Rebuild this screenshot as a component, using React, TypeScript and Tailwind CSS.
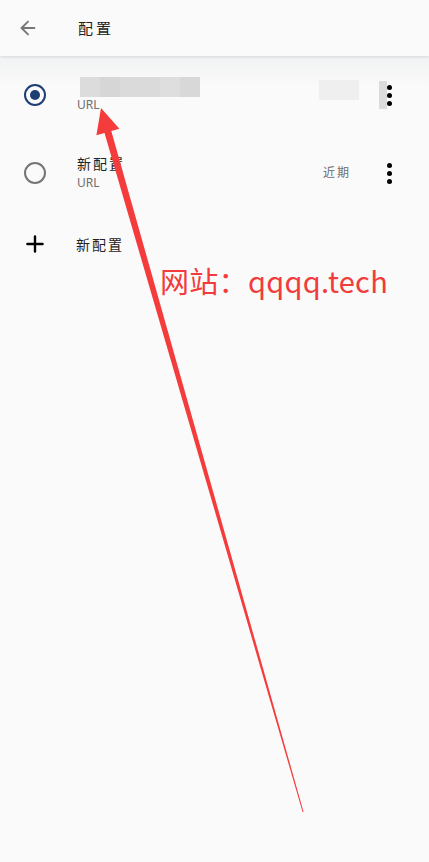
import { ArrowLeft, Plus } from "lucide-react";

const cjk = "font-['Noto_Sans','Noto_Sans_CJK_SC',sans-serif]";

function Dots() {
  return (
    <div className="flex w-[20px] flex-col items-center gap-[3px]">
      <span className="h-[5px] w-[5px] rounded-full bg-black" />
      <span className="h-[5px] w-[5px] rounded-full bg-black" />
      <span className="h-[5px] w-[5px] rounded-full bg-black" />
    </div>
  );
}

function Radio({ checked }: { checked: boolean }) {
  return checked ? (
    <div className="flex h-[22px] w-[22px] items-center justify-center rounded-full border-[2.5px] border-[#1e3f72]">
      <div className="h-[10px] w-[10px] rounded-full bg-[#1e3f72]" />
    </div>
  ) : (
    <div className="h-[22px] w-[22px] rounded-full border-2 border-[#757575]" />
  );
}

export default function App() {
  return (
    <div className={`relative h-[862px] w-[429px] overflow-hidden bg-[#fafafa] ${cjk}`}>
      <header className="relative z-10 flex h-[56px] items-center bg-[#fafafa] shadow-[0_1px_3px_rgba(0,0,0,0.12)]">
        <div className="flex w-[56px] justify-center">
          <ArrowLeft size={22} strokeWidth={2} className="text-[#757575]" />
        </div>
        <div className="ml-[22px] text-[15px] tracking-[3px] text-[#222]">配置</div>
      </header>

      <div className="flex h-[78px] items-center bg-gradient-to-b from-[#f2f3f4] to-[#fafafa] to-40%">
        <div className="flex w-[70px] justify-center">
          <Radio checked />
        </div>
        <div className="flex flex-1 flex-col">
          <div className="ml-[10px] flex h-[20px] w-[120px]">
            <div className="w-[20px] bg-[#dcdcdc]" />
            <div className="w-[20px] bg-[#d6d6d6]" />
            <div className="w-[40px] bg-[#dadada]" />
            <div className="w-[20px] bg-[#dedede]" />
            <div className="w-[20px] bg-[#d8d8d8]" />
          </div>
          <div className="ml-[7px] text-[12px] leading-[16px] text-[#6f6f6f]">URL</div>
        </div>
        <div className="mb-[10px] h-[20px] w-[40px] bg-[#efefef]" />
        <div className="ml-[20px] mr-[30px] flex items-center">
          <div className="-mr-[8px] h-[28px] w-[8px] bg-[#dcdcdc]" />
          <Dots />
        </div>
      </div>

      <div className="flex h-[78px] items-center">
        <div className="flex w-[70px] justify-center">
          <Radio checked={false} />
        </div>
        <div className="flex flex-1 flex-col pl-[7px]">
          <div className="text-[14px] leading-[20px] tracking-[2px] text-[#222]">新配置</div>
          <div className="text-[12px] leading-[18px] text-[#6f6f6f]">URL</div>
        </div>
        <div className="text-[12px] tracking-[2px] text-[#6f6f6f]">近期</div>
        <div className="ml-[28px] mr-[30px]">
          <Dots />
        </div>
      </div>

      <div className="flex h-[64px] items-center">
        <div className="flex w-[70px] justify-center">
          <Plus size={26} strokeWidth={2.2} className="text-black" />
        </div>
        <div className="pl-[6px] text-[14px] tracking-[2px] text-[#222]">新配置</div>
      </div>

      <div className="ml-[160px] mt-[-14px] font-['Microsoft_YaHei','Noto_Sans_CJK_SC','Noto_Sans',sans-serif] text-[29px] leading-[36px] tracking-[0.3px] text-[#f23b3b]">
        网站：qqqq.tech
      </div>

      <svg className="pointer-events-none absolute inset-0 z-20" width="429" height="862" viewBox="0 0 429 862">
        <polygon
          points="101,108 119.4,128.7 111.3,131 303.6,812 302.6,812 104.5,133 96.4,135.3"
          fill="#f53c3c"
        />
      </svg>
    </div>
  );
}
